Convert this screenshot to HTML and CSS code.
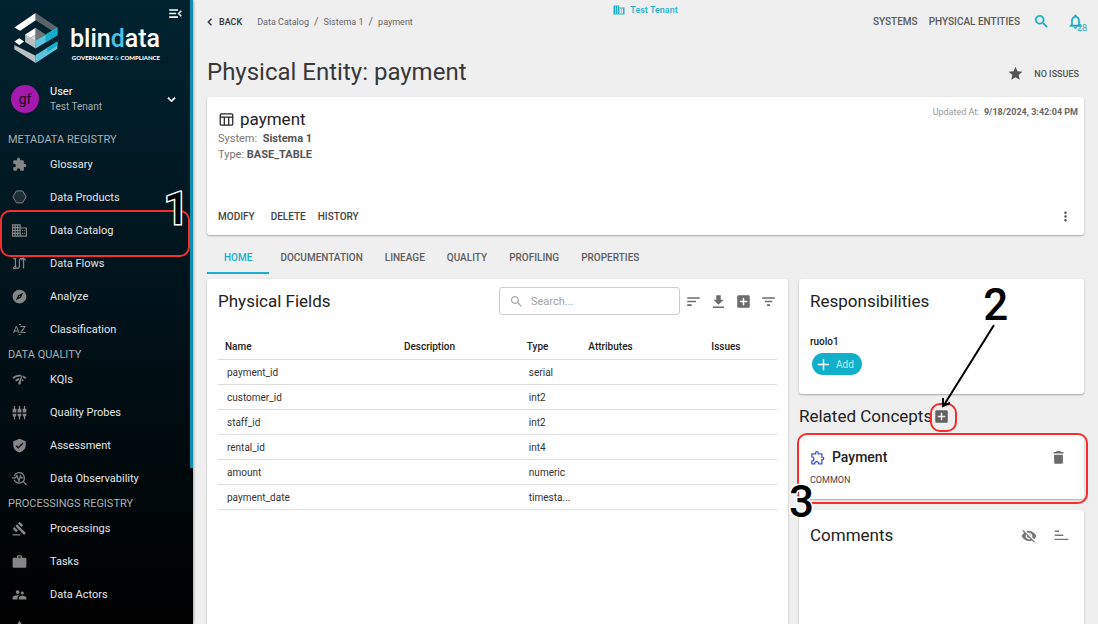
FILE: index.html
```
<!DOCTYPE html>
<html lang="en">
<head>
<meta charset="utf-8">
<title>Blindata - Physical Entity: payment</title>
<link rel="stylesheet" href="styles.css">
</head>
<body>
<div class="app">
  <aside class="sidebar">
    <header class="brand">
      <svg class="brand-mark" viewBox="0 0 132 152" aria-hidden="true">
        <path fill="#fff" d="M0 44 65 0v22L18 54z"/>
        <path fill="#5b6468" d="M65 0l66 44-16 10-50-32z"/>
        <path fill="#fff" d="M33 65 65 45v20L48 77z"/>
        <path fill="#d5d9db" d="M48 77 65 65v24z"/>
        <path fill="#6d767a" d="M65 45l30 20-30 22z"/>
        <path fill="#5cc3de" d="M65 84l66-40v24L65 108z"/>
        <path fill="#12afcb" d="M95 65l36-21v24L95 90z"/>
        <path fill="#b9bfc3" d="M33 65l32 19v24L33 88z"/>
        <path fill="#fff" d="M0 87l15-10 15 10-15 10z"/>
        <path fill="#b9bfc3" d="M0 97l65 33v22L0 110z"/>
        <path fill="#5cc3de" d="M65 128l66-41v22L65 152z"/>
        <path fill="#12afcb" d="M100 106l31-19v12l-31 20z"/>
      </svg>
      <div class="brand-text">
        <div class="brand-name">blin<span class="accent">d</span>ata</div>
        <div class="brand-tag">GOVERNANCE <span class="accent">&amp;</span> COMPLIANCE</div>
      </div>
      <button class="icon-btn collapse" aria-label="Collapse menu">
        <svg class="icon" viewBox="0 0 24 24"><path d="M2 19h14v-2.500H2zm0-5.800h11v-2.500H2zM2 5v2.500h14V5zm20 10.600L18.400 12 22 8.400 20.400 6.800 15.200 12l5.200 5.200z"/></svg>
      </button>
    </header>

    <button class="user">
      <span class="avatar">gf</span>
      <span class="user-text"><span class="user-name">User</span><span class="user-tenant">Test Tenant</span></span>
      <svg class="icon" viewBox="0 0 24 24"><path d="M16.590 8.590 12 13.170 7.410 8.590 6 10l6 6 6-6z" stroke="currentColor"/></svg>
    </button>

    <nav class="menu">
      <h2 class="menu-head">METADATA REGISTRY</h2>
      <a class="menu-item" href="#"><svg class="icon" viewBox="0 0 24 24"><path d="M20.500 11H19V7c0-1.100-.9-2-2-2h-4V3.500C13 2.120 11.880 1 10.500 1S8 2.120 8 3.500V5H4c-1.100 0-1.990.9-1.990 2v3.800H3.500c1.490 0 2.700 1.210 2.700 2.700s-1.210 2.700-2.700 2.700H2V20c0 1.100.9 2 2 2h3.800v-1.500c0-1.490 1.210-2.700 2.700-2.700s2.700 1.210 2.700 2.700V22H17c1.100 0 2-.9 2-2v-4h1.500c1.380 0 2.500-1.120 2.500-2.500S21.880 11 20.500 11z"/></svg>Glossary</a>
      <a class="menu-item" href="#"><svg class="icon" viewBox="0 0 24 24"><path fill="#1d3038" stroke="currentColor" stroke-width="1.500" d="M7 1.500h10L22.500 11 17 20.500H7L1.500 11z"/></svg>Data Products</a>
      <a class="menu-item current" href="#"><svg class="icon" viewBox="0 0 24 24"><path fill="none" stroke="currentColor" stroke-width="1.900" d="M1 3h12v18H1zM5 3v18M9 3v18M1 7.500h12M1 12h12M1 16.500h12M13 8h10v13H13M16 12h1.500M19 12h1.500M16 16.500h1.500M19 16.500h1.500"/></svg>Data Catalog
        <span class="mark-box mark-box-menu"></span><span class="mark-num mark-one">1</span></a>
      <a class="menu-item" href="#"><svg class="icon" viewBox="0 0 24 24"><path fill="none" stroke="currentColor" stroke-width="2" d="M2 4h3.500v12.500a3.200 3.200 0 0 0 6.400 0V7a3.300 3.300 0 0 1 6.600 0v13M2 19l3.500-3M15 7l3.500-4L22 7M2 20h4"/></svg>Data Flows</a>
      <a class="menu-item" href="#"><svg class="icon" viewBox="0 0 24 24"><path d="M12 10.900c-.61 0-1.100.49-1.100 1.100s.49 1.100 1.100 1.100 1.100-.49 1.100-1.100-.49-1.100-1.100-1.100zM12 1C5.900 1 1 5.900 1 12s4.900 11 11 11 11-4.900 11-11S18.100 1 12 1zm2.190 13.190L6 18l3.810-8.190L18 6l-3.810 8.190z"/></svg>Analyze</a>
      <a class="menu-item" href="#"><svg class="icon" viewBox="0 0 24 24"><path d="M14.940 4.660h-4.720l2.360-2.360zm-4.690 14.710h4.660l-2.330 2.330zM6.100 6.270L1.600 17.730h1.840l.92-2.450h5.110l.92 2.450h1.840L7.740 6.270H6.100zm-1.130 7.370l1.940-5.180 1.940 5.180H4.970zm10.760 2.500h6.120v1.590h-8.530v-1.290l5.920-8.560h-5.880v-1.600h8.300v1.260l-5.930 8.600z"/></svg>Classification</a>

      <h2 class="menu-head">DATA QUALITY</h2>
      <a class="menu-item" href="#"><svg class="icon" viewBox="0 0 24 24"><path d="M15.900 5c-.17 0-.32.09-.41.23l-.07.15-5.180 11.650c-.16.29-.26.61-.26.96 0 1.110.9 2.010 2.010 2.010.96 0 1.770-.68 1.960-1.590l.01-.03L16.400 5.500c0-.28-.22-.5-.5-.5zM1 9l2 2c2.880-2.880 6.790-4.080 10.530-3.620l1.190-2.680C9.890 3.840 4.740 5.270 1 9zm20 2l2-2c-1.640-1.640-3.550-2.820-5.590-3.570l-.53 2.820c1.500.62 2.900 1.530 4.120 2.750zm-4 4l2-2c-.8-.8-1.700-1.420-2.660-1.890l-.55 2.920c.42.27.83.59 1.210.97zM5 13l2 2c1.130-1.130 2.560-1.790 4.030-2l1.280-2.880c-2.630-.08-5.300.87-7.310 2.880z"/></svg>KQIs</a>
      <a class="menu-item" href="#"><svg class="icon" viewBox="0 0 24 24"><path d="M5 2c0-.55-.45-1-1-1s-1 .45-1 1v4H1v6h6V6H5V2zm4 14c0 1.300.84 2.400 2 2.820V23h2v-4.180c1.160-.41 2-1.510 2-2.820v-2H9v2zm-8 0c0 1.300.84 2.400 2 2.820V23h2v-4.180C6.160 18.400 7 17.300 7 16v-2H1v2zM21 6V2c0-.55-.45-1-1-1s-1 .45-1 1v4h-2v6h6V6h-2zm-8-4c0-.55-.45-1-1-1s-1 .45-1 1v4H9v6h6V6h-2V2zm4 14c0 1.300.84 2.400 2 2.820V23h2v-4.180c1.160-.41 2-1.510 2-2.820v-2h-6v2z"/></svg>Quality Probes</a>
      <a class="menu-item" href="#"><svg class="icon" viewBox="0 0 24 24"><path d="M12 1L2 5v6c0 5.550 4.300 10.740 10 12 5.700-1.260 10-6.450 10-12V5l-10-4zm-2 16l-4-4 1.410-1.410L10 14.170l6.590-6.590L18 9l-8 8z"/></svg>Assessment</a>
      <a class="menu-item" href="#"><svg class="icon" viewBox="0 0 24 24"><path fill="none" stroke="currentColor" stroke-width="2" d="M3.500 8a8.500 8.500 0 1 1 0 6M18 17l5 5M0 11h5.500L8 7l3 9 2.500-8 1.500 3h3"/></svg>Data Observability</a>

      <h2 class="menu-head">PROCESSINGS REGISTRY</h2>
      <a class="menu-item" href="#"><svg class="icon" viewBox="0 0 24 24"><path d="M1 21h12v2H1zM5.245 8.070l2.830-2.827 14.140 14.142-2.828 2.828zM12.317 1l5.657 5.656-2.830 2.830-5.654-5.660zM3.825 9.485l5.657 5.657-2.828 2.828-5.657-5.657z"/></svg>Processings</a>
      <a class="menu-item" href="#"><svg class="icon" viewBox="0 0 24 24"><path d="M21 6h-5V4c0-1.110-.89-2-2-2h-4c-1.110 0-2 .89-2 2v2H3c-1.110 0-2 .89-2 2v12c0 1.110.89 2 2 2h18c1.110 0 2-.89 2-2V8c0-1.110-.89-2-2-2zm-7 0h-4V4h4v2z"/></svg>Tasks</a>
      <a class="menu-item" href="#"><svg class="icon" viewBox="0 0 24 24"><path d="M16.500 12c1.380 0 2.490-1.120 2.490-2.500S17.880 7 16.500 7C15.120 7 14 8.120 14 9.500s1.120 2.500 2.500 2.500zM9 11c1.660 0 2.990-1.340 2.990-3S10.660 5 9 5C7.340 5 6 6.340 6 8s1.340 3 3 3zm7.500 3c-1.830 0-5.500.92-5.500 2.750V20h12v-3.250c0-1.830-4.670-2.750-6.500-2.750zM9 13c-2.330 0-8 1.170-8 3.500V20h8v-3.250c0-.85.33-2.340 2.370-3.470C10.500 13.100 9.660 13 9 13z"/></svg>Data Actors</a>
      <a class="menu-item" href="#" aria-label="More"><svg class="icon" viewBox="0 0 24 24"><path d="M12 1 7 9h10zM2 14h9v9H2zM14 14h8v9h-8z"/></svg></a>
    </nav>
    <span class="scroll-thumb"></span>
  </aside>

  <main class="main">
    <header class="topbar">
      <div class="trail">
        <button class="back"><svg class="icon icon-s" viewBox="0 0 24 24"><path d="M16 6.500 10.500 12 16 17.500l-2 2L6.500 12 14 4.500z"/></svg>BACK</button>
        <nav class="crumbs" aria-label="Breadcrumb">
          <a href="#">Data Catalog</a><span class="slash">/</span><a href="#">Sistema 1</a><span class="slash">/</span><a href="#">payment</a>
        </nav>
      </div>
      <a class="tenant" href="#"><svg class="icon icon-s" viewBox="0 0 24 24"><path d="M12 7V3H1v18h22V7H12zM6 19H4v-2h2v2zm0-4H4v-2h2v2zm0-4H4V9h2v2zm0-4H4V5h2v2zm4 12H8v-2h2v2zm0-4H8v-2h2v2zm0-4H8V9h2v2zm0-4H8V5h2v2zm10 12h-8v-2h2v-2h-2v-2h2v-2h-2V9h8v10zm-2-8h-2v2h2v-2zm0 4h-2v2h2v-2z"/></svg>Test Tenant</a>
      <div class="top-actions">
        <a class="top-link" href="#">SYSTEMS</a>
        <a class="top-link" href="#">PHYSICAL ENTITIES</a>
        <button class="icon-btn accent-btn" aria-label="Search"><svg class="icon" viewBox="0 0 24 24"><path d="M15.500 14h-.79l-.28-.27C15.410 12.590 16 11.110 16 9.500 16 5.910 13.090 3 9.500 3S3 5.910 3 9.500 5.910 16 9.500 16c1.610 0 3.090-.59 4.230-1.570l.27.28v.79l5 4.990L20.490 19l-4.990-5zm-6 0C7.010 14 5 11.990 5 9.500S7.010 5 9.500 5 14 7.010 14 9.500 11.990 14 9.500 14z" stroke="currentColor" stroke-width=".6"/></svg></button>
        <button class="icon-btn accent-btn bell" aria-label="Notifications"><svg class="icon" viewBox="0 0 24 24"><path d="M12 22c1.100 0 2-.9 2-2h-4c0 1.100.9 2 2 2zm6-6v-5c0-3.070-1.630-5.640-4.500-6.320V4c0-.83-.67-1.500-1.500-1.500s-1.500.67-1.500 1.500v.68C7.640 5.360 6 7.920 6 11v5l-2 2v1h16v-1l-2-2zm-2 1H8v-6c0-2.480 1.510-4.500 4-4.500s4 2.020 4 4.500v6z" stroke="currentColor" stroke-width=".6"/></svg><span class="badge">28</span></button>
      </div>
    </header>

    <div class="title-row">
      <h1>Physical Entity: payment</h1>
      <button class="icon-btn star" aria-label="Favourite"><svg class="icon" viewBox="0 0 24 24"><path d="M12 17.800 18.800 22l-1.800-7.700L23 9l-7.900-.7L12 1 8.900 8.300 1 9l6 5.300L5.200 22z"/></svg></button>
      <button class="issues">NO ISSUES</button>
    </div>

    <section class="card entity">
      <div class="entity-top">
        <div>
          <h2 class="entity-name"><svg class="icon" viewBox="0 0 24 24"><path fill="none" stroke="currentColor" stroke-width="2" d="M4 3h16a2 2 0 0 1 2 2v14a2 2 0 0 1-2 2H4a2 2 0 0 1-2-2V5a2 2 0 0 1 2-2zM2 8h20M8.500 8v13M15.500 8v13"/></svg>payment</h2>
          <p class="meta"><span>System:&nbsp; </span><b>Sistema 1</b></p>
          <p class="meta"><span>Type: </span><b>BASE_TABLE</b></p>
        </div>
        <p class="updated">Updated At:&nbsp; <b>9/18/2024, 3:42:04 PM</b></p>
      </div>
      <div class="entity-actions">
        <button>MODIFY</button>
        <button>DELETE</button>
        <button>HISTORY</button>
        <button class="icon-btn more" aria-label="More actions"><svg class="icon" viewBox="0 0 24 24"><path d="M12 8c1.100 0 2-.9 2-2s-.9-2-2-2-2 .9-2 2 .9 2 2 2zm0 2c-1.100 0-2 .9-2 2s.9 2 2 2 2-.9 2-2-.9-2-2-2zm0 6c-1.100 0-2 .9-2 2s.9 2 2 2 2-.9 2-2-.9-2-2-2z"/></svg></button>
      </div>
    </section>

    <div class="tabs" role="tablist">
      <button role="tab" class="tab tab-on" aria-selected="true">HOME</button>
      <button role="tab" class="tab">DOCUMENTATION</button>
      <button role="tab" class="tab">LINEAGE</button>
      <button role="tab" class="tab">QUALITY</button>
      <button role="tab" class="tab">PROFILING</button>
      <button role="tab" class="tab">PROPERTIES</button>
    </div>

    <div class="columns">
      <section class="card fields">
        <div class="fields-head">
          <h2 class="card-title">Physical Fields</h2>
          <label class="search">
            <svg class="icon" viewBox="0 0 24 24"><path d="M15.500 14h-.79l-.28-.27C15.410 12.590 16 11.110 16 9.500 16 5.910 13.090 3 9.500 3S3 5.910 3 9.500 5.910 16 9.500 16c1.610 0 3.090-.59 4.230-1.570l.27.28v.79l5 4.990L20.490 19l-4.990-5zm-6 0C7.010 14 5 11.990 5 9.500S7.010 5 9.500 5 14 7.010 14 9.500 11.990 14 9.500 14z"/></svg>
            <input type="text" placeholder="Search..." aria-label="Search fields">
          </label>
          <div class="tools">
            <button class="icon-btn" aria-label="Sort"><svg class="icon" viewBox="0 0 24 24"><path d="M2 19h7v-2.500H2zM2 5v2.500h20V5zm0 8.200h14v-2.500H2z"/></svg></button>
            <button class="icon-btn" aria-label="Download"><svg class="icon" viewBox="0 0 24 24"><path d="M20 9h-4.500V2h-7v7H4l8 8zM3 20v2.500h18V20z"/></svg></button>
            <button class="icon-btn" aria-label="Add field"><svg class="icon" viewBox="0 0 24 24"><path d="M20 2H4a2 2 0 0 0-2 2v16c0 1.100.9 2 2 2h16a2 2 0 0 0 2-2V4a2 2 0 0 0-2-2zm-2 11.200h-4.800V18h-2.400v-4.800H6v-2.400h4.800V6h2.400v4.800H18z"/></svg></button>
            <button class="icon-btn" aria-label="Filter"><svg class="icon" viewBox="0 0 24 24"><path d="M9.500 19h5v-2.500h-5zM2 5v2.500h20V5zm4 8.200h12v-2.500H6z"/></svg></button>
          </div>
        </div>
        <table>
          <thead>
            <tr><th class="c-name">Name</th><th class="c-desc">Description</th><th class="c-type">Type</th><th class="c-attr">Attributes</th><th>Issues</th></tr>
          </thead>
          <tbody>
            <tr><td>payment_id</td><td></td><td>serial</td><td></td><td></td></tr>
            <tr><td>customer_id</td><td></td><td>int2</td><td></td><td></td></tr>
            <tr><td>staff_id</td><td></td><td>int2</td><td></td><td></td></tr>
            <tr><td>rental_id</td><td></td><td>int4</td><td></td><td></td></tr>
            <tr><td>amount</td><td></td><td>numeric</td><td></td><td></td></tr>
            <tr><td>payment_date</td><td></td><td>timesta...</td><td></td><td></td></tr>
          </tbody>
        </table>
      </section>

      <div class="side">
        <section class="card resp">
          <h2 class="card-title">Responsibilities</h2>
          <p class="role">ruolo1</p>
          <button class="add"><svg class="icon" viewBox="0 0 24 24"><path d="M21 13.200h-7.800V21h-2.400v-7.800H3v-2.400h7.800V3h2.400v7.800H21z"/></svg>Add</button>
        </section>

        <div class="related">
          <h2 class="card-title">Related Concepts</h2>
          <span class="add-wrap">
            <button class="icon-btn" aria-label="Add concept"><svg class="icon" viewBox="0 0 24 24"><path d="M20 2H4a2 2 0 0 0-2 2v16c0 1.100.9 2 2 2h16a2 2 0 0 0 2-2V4a2 2 0 0 0-2-2zm-2 11.200h-4.800V18h-2.400v-4.800H6v-2.400h4.800V6h2.400v4.800H18z"/></svg></button>
            <span class="mark-box mark-box-add"></span>
            <svg class="arrow" viewBox="0 0 60 88" aria-hidden="true"><path d="M54 3 4 83M3 76v8l7-3"/></svg>
            <span class="mark-num mark-two">2</span>
          </span>
        </div>

        <section class="card concept">
          <div class="concept-row">
            <svg class="icon concept-icon" viewBox="0 0 24 24"><path fill="none" stroke="currentColor" stroke-width="2" d="M3 6h6V4.500a2 2 0 0 1 4 0V6h6v5.500h1a2 2 0 0 1 0 4h-1V22h-5c0-2-1.300-3.500-3.300-3.500S7.500 20 7.500 22H3v-4.500c2 0 3.300-1.500 3.300-3.300S5 11 3 11z"/></svg>
            <h3>Payment</h3>
            <button class="icon-btn" aria-label="Delete concept"><svg class="icon" viewBox="0 0 24 24"><path d="M5 7.500V20c0 1.100.9 2 2 2h10c1.100 0 2-.9 2-2V7.500zM20 3h-4l-1-1.500H9L8 3H4v2.500h16z"/></svg></button>
          </div>
          <p class="concept-kind">COMMON</p>
          <span class="mark-box mark-box-card"></span>
          <span class="mark-num mark-three">3</span>
        </section>

        <section class="card comments">
          <h2 class="card-title">Comments</h2>
          <button class="icon-btn" aria-label="Hide comments"><svg class="icon icon-l" viewBox="0 0 24 24"><path d="M12 7c2.760 0 5 2.240 5 5 0 .65-.13 1.260-.36 1.830l2.920 2.920c1.510-1.260 2.700-2.890 3.430-4.750-1.730-4.390-6-7.500-11-7.500-1.400 0-2.740.25-3.980.7l2.160 2.160C10.740 7.130 11.350 7 12 7zM2 4.270l2.280 2.280.46.46C3.080 8.300 1.780 10.020 1 12c1.730 4.390 6 7.500 11 7.500 1.550 0 3.030-.3 4.380-.84l.42.42L19.730 22 21 20.730 3.270 3 2 4.270zM7.530 9.800l1.550 1.550c-.05.21-.08.43-.08.65 0 1.660 1.340 3 3 3 .22 0 .44-.03.65-.08l1.550 1.550c-.67.33-1.410.53-2.200.53-2.760 0-5-2.240-5-5 0-.79.2-1.530.53-2.200zm4.310-.78l3.150 3.150.02-.16c0-1.660-1.340-3-3-3l-.17.01z"/></svg></button>
          <button class="icon-btn" aria-label="Sort comments"><svg class="icon" viewBox="0 0 24 24"><path d="M1 4v2.300h7V4zm0 6.500v2.300h14v-2.300zM1 17v2.300h22V17z"/></svg></button>
        </section>
      </div>
    </div>
  </main>
</div>
</body>
</html>
```
FILE: styles.css
```
* { box-sizing: border-box; }
body {
  margin: 0;
  font-family: Roboto, "Liberation Sans", sans-serif;
  font-size: 11px;
  color: #222;
  background: #efefef;
}
h1, h2, h3, p { margin: 0; font-weight: 400; }
a { color: inherit; text-decoration: none; }
button {
  padding: 0;
  border: 0;
  background: none;
  font: inherit;
  color: inherit;
  cursor: pointer;
}
.app { display: flex; height: 100vh; overflow: hidden; }
.icon { display: block; flex: none; width: 15px; height: 15px; fill: currentColor; }
.icon-s { width: 12px; height: 12px; }
.icon-l { width: 16px; height: 16px; }
.icon-btn { display: block; }

/* Sidebar */
.sidebar {
  position: relative;
  flex: none;
  width: 193px;
  overflow: hidden;
  color: #e3e6e8;
  background: linear-gradient(#002330, #001219 50%, #000);
  box-shadow: 0 0 3px rgba(0, 0, 0, .5);
}
.scroll-thumb {
  position: absolute;
  top: 0;
  right: 0;
  width: 3px;
  height: 75%;
  background: #0e8fae;
}
.brand {
  display: flex;
  align-items: flex-start;
  height: 77px;
  padding: 13px 0 0 14px;
}
.brand-mark { width: 44px; height: 50px; flex: none; }
.brand-text { margin-left: 12px; padding-top: 11px; width: 90px; color: #fff; }
.brand-name { font-size: 25px; line-height: 29px; font-weight: 500; }
.brand-tag {
  margin-top: 1px;
  font: 900 6px/7px Lato, sans-serif;
  text-align: right;
  white-space: nowrap;
}
.accent { color: #4dbfe0; }
.collapse { margin-left: 8px; margin-top: -7px; color: #fff; }
.user {
  display: flex;
  align-items: center;
  width: 100%;
  height: 54px;
  padding: 0 14px 10px 11px;
  text-align: left;
}
.user .icon { color: #fff; }
.avatar {
  width: 28px;
  height: 28px;
  border-radius: 50%;
  background: #a31aad;
  color: #1d0420;
  font-size: 14px;
  line-height: 28px;
  text-align: center;
}
.user-text { flex: 1; margin-left: 11px; }
.user-name { display: block; line-height: 16px; color: #fff; }
.user-tenant { display: block; font-size: 10px; line-height: 14px; color: #a3adb1; }
.menu-head {
  padding-left: 8px;
  font-size: 11px;
  line-height: 17px;
  color: #a9b0b3;
}
.menu-item {
  position: relative;
  display: flex;
  align-items: center;
  gap: 23px;
  height: 33px;
  padding-left: 12px;
}
.menu-item .icon { color: #858585; }

/* Hand-placed guide marks */
.mark-box { position: absolute; border: 2px solid #f52d2d; border-radius: 10px; pointer-events: none; }
.mark-box-menu { left: 0; width: 190px; top: -4px; height: 47px; }
.mark-box-add { left: -4px; top: -6px; width: 27px; height: 29px; }
.mark-box-card { left: -2px; right: -4px; top: -2px; bottom: -5px; }
.mark-num {
  position: absolute;
  font: 500 44px/42px Roboto, sans-serif;
  color: #000;
  -webkit-text-stroke: 3px #fff;
  paint-order: stroke fill;
}
.mark-one { left: 164px; top: -26px; }
.mark-two { left: 49px; top: -125px; }
.mark-three { left: -10px; top: 46px; }
.arrow {
  position: absolute;
  left: 6px;
  top: -87px;
  width: 60px;
  height: 88px;
  fill: none;
  stroke: #000;
  stroke-width: 2;
}

/* Main area */
.main { flex: 1; min-width: 0; display: flex; flex-direction: column; padding: 0 14px; }
.topbar { display: grid; grid-template-columns: 1fr auto 1fr; height: 43px; }
.trail { display: flex; align-items: center; font-size: 9px; }
.back { display: flex; align-items: center; font-weight: 500; color: #333; }
.back .icon { margin-left: -3px; margin-right: 3px; }
.crumbs { display: flex; align-items: center; gap: 5px; margin-left: 15px; color: #666; }
.slash { font-size: 11px; }
.tenant { display: flex; align-items: center; gap: 5px; height: 19px; font-size: 9px; font-weight: 500; color: #1fb0cc; }
.top-actions { display: flex; align-items: center; justify-content: flex-end; gap: 11px; }
.top-actions .icon { width: 17px; height: 17px; }
.top-link { font-size: 10px; font-weight: 500; color: #5a5a5a; }
.accent-btn { color: #17adc9; margin-left: 2px; }
.bell { position: relative; margin-left: 6px; }
.badge { position: absolute; left: 10px; top: 10px; font-size: 9px; line-height: 10px; }
.title-row { display: flex; align-items: center; height: 54px; padding: 4px 5px 0 0; }
h1 { flex: 1; font-size: 24px; line-height: 32px; color: #383838; }
.star { color: #555; margin-right: 11px; padding-top: 3px; }
.issues { font-size: 9px; font-weight: 500; color: #555; padding-top: 3px; }

.card {
  background: #fff;
  border-radius: 3px;
  box-shadow: 0 1px 2px rgba(0, 0, 0, .3);
}
.card-title { font-size: 17px; line-height: 20px; }
.entity { height: 138px; flex: none; display: flex; flex-direction: column; justify-content: space-between; padding: 11px; }
.entity-top { display: flex; justify-content: space-between; }
.entity-name { display: flex; align-items: center; gap: 6px; font-size: 17px; line-height: 23px; }
.entity-name .icon { margin-left: 1px; }
.meta { font-size: 11px; line-height: 16px; color: #777; }
.meta b { color: #555; font-weight: 700; }
.updated { font-size: 9px; line-height: 8px; color: #999; margin-right: -5px; }
.updated b { color: #666; }
.entity-actions { display: flex; align-items: center; gap: 12px; font-size: 10px; font-weight: 500; color: #444; }
.entity-actions button:first-child { margin-right: 4px; }
.more { margin-left: auto; color: #555; }

.tabs { display: flex; height: 39px; margin-bottom: 5px; }
.tab { padding: 7px 11px 0; font-size: 10px; font-weight: 500; color: #5e5e5e; border-bottom: 2px solid transparent; }
.tab-on { padding: 7px 17px 0; color: #19b0cc; border-color: #19b0cc; }

.columns { flex: 1; min-height: 0; display: grid; grid-template-columns: minmax(0, 581fr) minmax(0, 285fr); gap: 11px; }
.fields { padding: 8px 11px; border-radius: 3px 3px 0 0; }
.fields-head { display: flex; align-items: center; }
.search {
  display: flex;
  align-items: center;
  gap: 7px;
  width: 181px;
  height: 28px;
  margin-left: auto;
  padding-left: 9px;
  border: 1px solid #ccc;
  border-radius: 3px;
  color: #aaa;
}
.search input { width: 100%; min-width: 0; border: 0; outline: 0; padding: 0; background: none; font: inherit; }
.search input::placeholder { color: #a2a2a2; }
.tools { display: flex; gap: 10px; margin-left: 6px; margin-right: 1px; color: #6b6b6b; }
table { width: 100%; margin-top: 19px; border-collapse: collapse; table-layout: fixed; font-size: 10px; }
th, td { height: 25px; padding: 1px 0 0 9px; text-align: left; border-bottom: 1px solid #ddd; color: #333; }
th { padding-left: 7px; font-weight: 500; color: #222; }
.c-name { width: 32%; }
.c-desc { width: 22%; }
.c-type { width: 11%; }
.c-attr { width: 22%; }

.side { display: flex; flex-direction: column; }
.resp { padding: 12px 11px; height: 115px; flex: none; }
.role { margin-top: 25px; font-size: 10px; line-height: 12px; font-weight: 500; }
.add {
  display: flex;
  align-items: center;
  gap: 5px;
  height: 22px;
  margin: 5px 0 0 2px;
  padding: 0 8px 0 4px;
  border-radius: 11px;
  background: #12afcb;
  color: #c4edf5;
  font-size: 10px;
}
.add .icon { color: #fff; }
.related { display: flex; align-items: center; height: 41px; padding-top: 3px; }
.add-wrap { position: relative; margin-left: 2px; color: #616161; }
.concept { position: relative; flex: none; height: 64px; padding: 12px 11px; }
.concept-row { display: flex; align-items: center; padding-right: 7px; color: #6a6a6a; }
.concept-icon { color: #4552e6; }
.concept h3 { flex: 1; margin-left: 7px; font-size: 14px; line-height: 20px; font-weight: 500; color: #222; }
.concept-kind { margin-top: 7px; font-size: 9px; line-height: 12px; color: #444; }
.comments { flex: 1; display: flex; align-items: flex-start; gap: 17px; margin-top: 11px; padding: 15px 15px 0 11px; border-radius: 3px 3px 0 0; color: #777; }
.comments .card-title { flex: 1; color: #222; }
.comments .icon-btn { padding-top: 3px; }
```
